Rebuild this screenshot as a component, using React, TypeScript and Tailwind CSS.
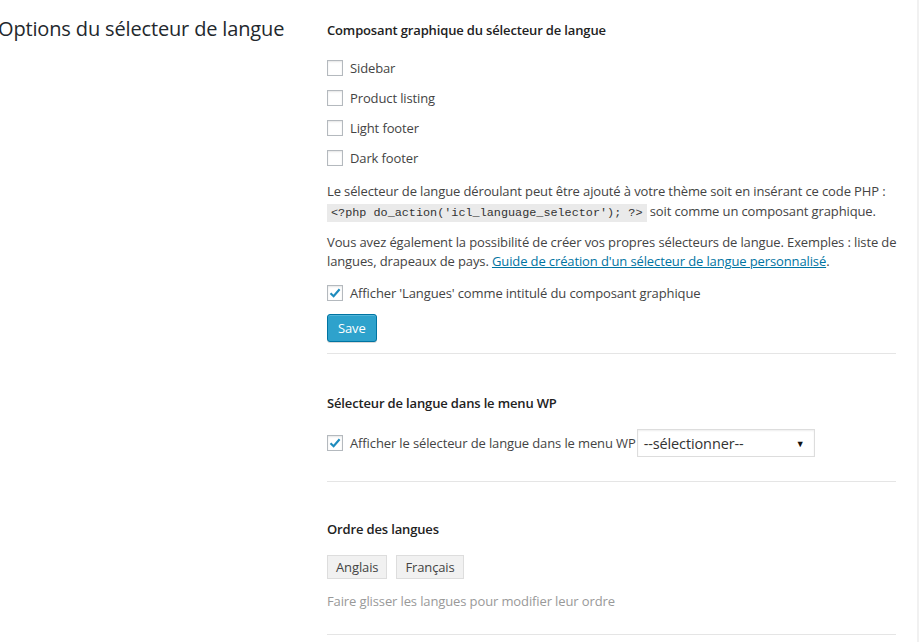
import React from "react";

function Box({ checked }: { checked?: boolean }) {
  return (
    <span className="inline-flex h-[16px] w-[16px] shrink-0 items-center justify-center border border-[#b4b9be] bg-white shadow-[inset_0_1px_2px_rgba(0,0,0,0.1)]">
      {checked && (
        <svg width="14" height="14" viewBox="0 0 14 14">
          <path d="M2.5 7.2 L5.6 10.2 L11.6 3.2" fill="none" stroke="#1e8cbe" strokeWidth="2.2" />
        </svg>
      )}
    </span>
  );
}

function CheckRow({ label, checked }: { label: string; checked?: boolean }) {
  return (
    <label className="flex h-[30px] items-center gap-[7px]">
      <Box checked={checked} />
      <span>{label}</span>
    </label>
  );
}

export default function App() {
  return (
    <div
      className="flex min-h-[642px] w-[919px] bg-white text-[13px] leading-[19px] tracking-[-0.12px] text-[#444]"
      style={{ fontFamily: '"Open Sans", "Noto Sans", sans-serif' }}
    >
      <div className="w-[327px] shrink-0">
        <h2 className="-ml-[2px] mt-[16px] text-[20px] leading-[26px] font-normal tracking-[-0.15px] text-[#23282d]">
          Options du sélecteur de langue
        </h2>
      </div>
      <div className="flex-1 pr-[21px]">
        <div className="border-b border-[#e5e5e5] pb-[11px]">
          <h3 className="mt-[20px] text-[13px] font-semibold leading-[20px] tracking-[-0.15px] text-[#222]">
            Composant graphique du sélecteur de langue
          </h3>
          <div className="mt-[13px] flex flex-col">
            <CheckRow label="Sidebar" />
            <CheckRow label="Product listing" />
            <CheckRow label="Light footer" />
            <CheckRow label="Dark footer" />
          </div>
          <p className="mt-[8px] leading-[20px] whitespace-nowrap">
            Le sélecteur de langue déroulant peut être ajouté à votre thème soit en insérant ce code PHP :
            <br />
            <code
              className="bg-[#eaeaea] px-[4px] py-[2px] tracking-normal text-[#333]"
              style={{ fontFamily: '"Liberation Mono", "DejaVu Sans Mono", monospace', fontSize: "11.8px" }}
            >
              &lt;?php do_action('icl_language_selector'); ?&gt;
            </code>{" "}
            soit comme un composant graphique.
          </p>
          <p className="mt-[10px] leading-[19px] whitespace-nowrap">
            Vous avez également la possibilité de créer vos propres sélecteurs de langue. Exemples : liste de
            <br />
            langues, drapeaux de pays.{" "}
            <a className="text-[#0074a2] underline" href="#">
              Guide de création d'un sélecteur de langue personnalisé
            </a>
            .
          </p>
          <div className="mt-[7px]">
            <CheckRow label="Afficher 'Langues' comme intitulé du composant graphique" checked />
          </div>
          <button className="mt-[6px] h-[28px] rounded-[3px] border border-[#0074a2] bg-[#2ea2cc] px-[10px] text-[13px] leading-[26px] text-white shadow-[inset_0_1px_0_rgba(120,200,230,0.5),0_1px_0_rgba(0,0,0,0.15)]">
            Save
          </button>
        </div>

        <div className="border-b border-[#e5e5e5] pb-[24px]">
          <h3 className="mt-[39px] text-[13px] font-semibold leading-[20px] tracking-[-0.15px] text-[#222]">
            Sélecteur de langue dans le menu WP
          </h3>
          <div className="mt-[16px] flex items-center gap-[1px]">
            <label className="flex items-center gap-[7px]">
              <Box checked />
              <span>Afficher le sélecteur de langue dans le menu WP</span>
            </label>
            <div className="flex h-[28px] w-[178px] items-center justify-between border border-[#ddd] bg-white pl-[6px] pr-[9px] text-[14.5px] text-[#333] shadow-[inset_0_1px_2px_rgba(0,0,0,0.07)]">
              <span>--sélectionner--</span>
              <span className="text-[9px] text-[#111]">▼</span>
            </div>
          </div>
        </div>

        <div className="border-b border-[#e5e5e5] pb-[23px]">
          <h3 className="mt-[37px] text-[13px] font-semibold leading-[20px] tracking-[-0.15px] text-[#222]">
            Ordre des langues
          </h3>
          <div className="mt-[16px] flex gap-[9px]">
            <span className="h-[24px] border border-[#ddd] bg-[#f1f1f1] px-[8px] leading-[22px] text-[#444]">
              Anglais
            </span>
            <span className="h-[24px] border border-[#ddd] bg-[#f1f1f1] px-[8px] leading-[22px] text-[#444]">
              Français
            </span>
          </div>
          <p className="mt-[13px] text-[#999]">Faire glisser les langues pour modifier leur ordre</p>
        </div>
      </div>
      <div className="w-[2px] shrink-0 bg-[#f1f1f1]" />
    </div>
  );
}
